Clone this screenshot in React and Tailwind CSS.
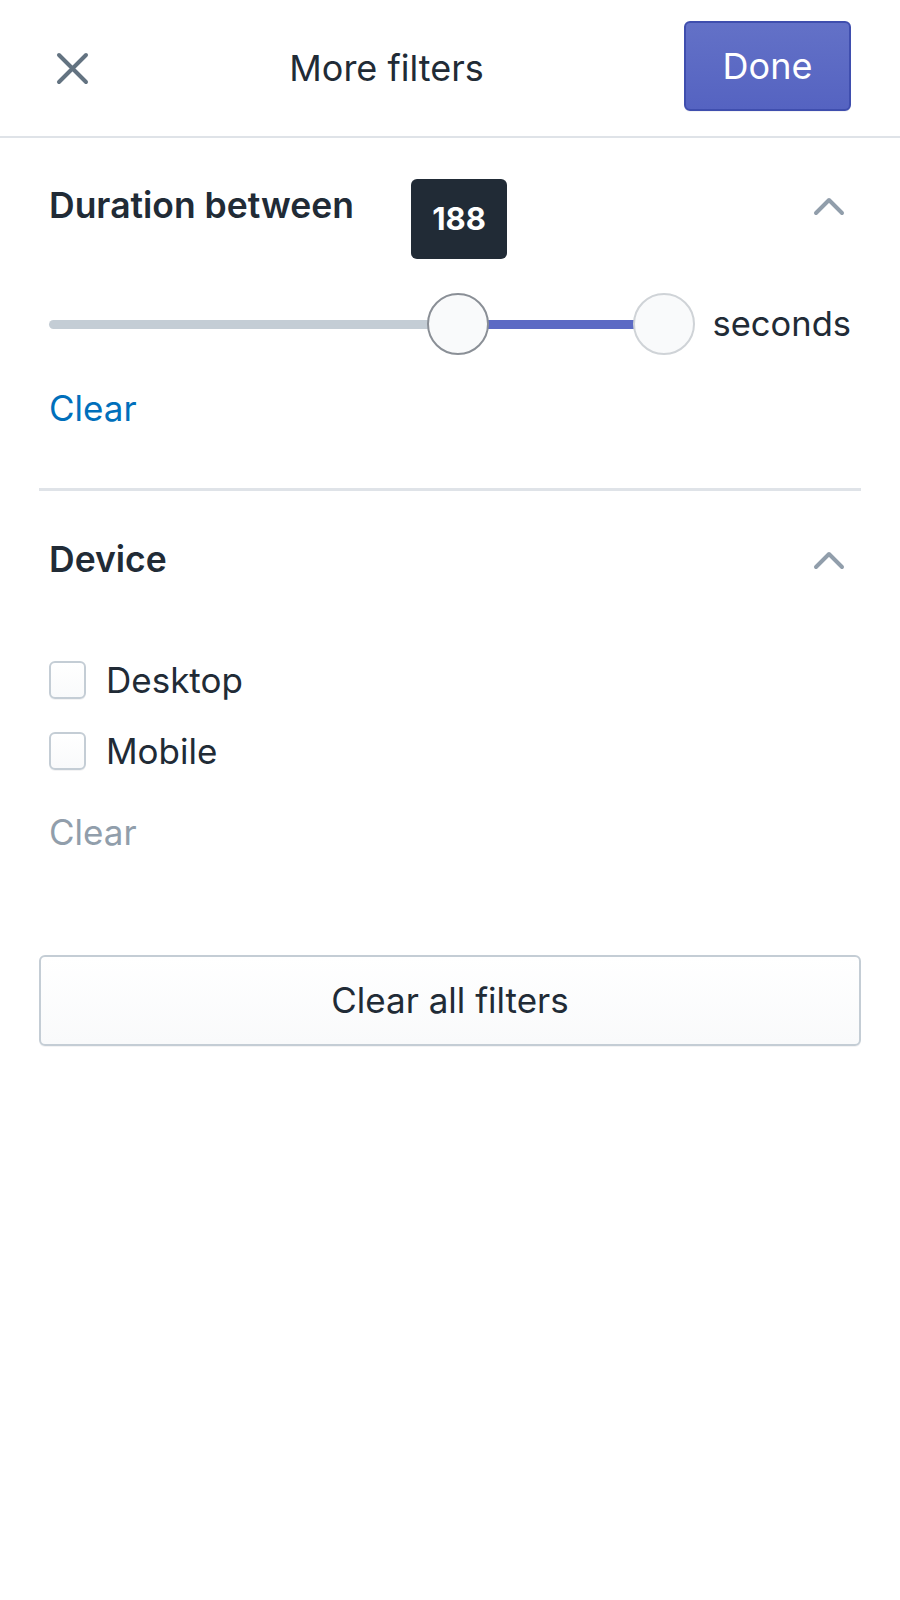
import { useState } from 'react';

const Chevron = () => (
  <svg width="32" height="22" viewBox="0 0 32 22" className="text-[#919eab]">
    <polyline points="3,18 16,5 29,18" fill="none" stroke="currentColor" strokeWidth="4" strokeLinecap="round" strokeLinejoin="round" />
  </svg>
);

const Checkbox = ({ label, checked, onChange }) => (
  <label className="flex items-center gap-[20px] h-[71px] cursor-pointer">
    <span
      onClick={onChange}
      className="w-[37px] h-[38px] rounded-[6px] border-2 border-[#c4cdd5] bg-gradient-to-b from-white to-[#f9fafb] shadow-[0_1px_0_rgba(22,29,37,0.05)]"
    ></span>
    <span className="text-[35px] text-[#212b36]">{label}</span>
  </label>
);

const App = () => {
  const [devices, setDevices] = useState({ desktop: false, mobile: false });

  return (
    <div className="min-h-screen bg-white font-['Inter',sans-serif] text-[#212b36]">

      {/* Header */}
      <div className="h-[138px] flex items-center border-b-2 border-[#dfe3e8] pl-[56px] pr-[49px]">
        <button className="w-[33px] h-[33px] flex items-center justify-center text-[#637381]">
          <svg width="33" height="33" viewBox="0 0 33 33">
            <path d="M3 3 L30 30 M30 3 L3 30" stroke="currentColor" strokeWidth="4" strokeLinecap="round" />
          </svg>
        </button>
        <div className="flex-1 text-center text-[36px] text-[#212b36]">More filters</div>
        <button className="w-[167px] h-[90px] mb-[4px] rounded-[6px] border-2 border-[#3f4eae] bg-gradient-to-b from-[#6371c7] to-[#5563c1] text-white text-[36px] shadow-[0_1px_0_rgba(22,29,37,0.05)]">
          Done
        </button>
      </div>

      <div className="px-[39px]">

        {/* Duration between */}
        <div className="px-[10px] pt-[35px] pb-[53px]">
          <div className="flex items-center justify-between h-[66px]">
            <h2 className="text-[35.5px] font-semibold">Duration between</h2>
            <div className="mr-[6px]"><Chevron /></div>
          </div>

          <div className="flex items-center gap-[18px] mt-[54px] h-[62px]">
            <div className="relative flex-1 h-[62px]">
              <div className="absolute left-0 right-[30px] top-[27px] h-[9px] rounded-full bg-[#c4cdd5]"></div>
              <div className="absolute left-[409px] right-[30px] top-[27px] h-[9px] bg-[#5c6ac4]"></div>

              <div className="absolute left-[362px] -top-[114px] w-[96px] h-[80px] rounded-[6px] bg-[#212b36] flex items-center justify-center">
                <span className="text-white text-[31px] font-bold">188</span>
              </div>

              <div className="absolute left-[378px] top-0 w-[62px] h-[62px] rounded-full bg-[#f9fafb] border-2 border-[#8a8f96]"></div>
              <div className="absolute right-0 top-0 w-[62px] h-[62px] rounded-full bg-[#f9fafb] border-2 border-[#cfd3d7]"></div>
            </div>
            <span className="text-[34.5px]">seconds</span>
          </div>

          <button className="mt-[27px] text-[35px] text-[#006fbb]">Clear</button>
        </div>

        <div className="h-[3px] bg-[#dfe3e8]"></div>

        {/* Device */}
        <div className="px-[10px] pt-[36px]">
          <div className="flex items-center justify-between h-[66px]">
            <h2 className="text-[35.5px] font-semibold">Device</h2>
            <div className="mr-[6px]"><Chevron /></div>
          </div>

          <div className="mt-[52px]">
            <Checkbox
              label="Desktop"
              checked={devices.desktop}
              onChange={() => setDevices({ ...devices, desktop: !devices.desktop })}
            />
            <Checkbox
              label="Mobile"
              checked={devices.mobile}
              onChange={() => setDevices({ ...devices, mobile: !devices.mobile })}
            />
          </div>

          <button className="mt-[19px] text-[35px] text-[#919eab]">Clear</button>
        </div>

        <button className="mt-[97px] w-full h-[91px] rounded-[6px] border-2 border-[#c4cdd5] bg-gradient-to-b from-white to-[#f9fafb] text-[35px] text-[#212b36] shadow-[0_1px_0_rgba(22,29,37,0.05)]">
          Clear all filters
        </button>
      </div>
    </div>
  );
};

export default App;
